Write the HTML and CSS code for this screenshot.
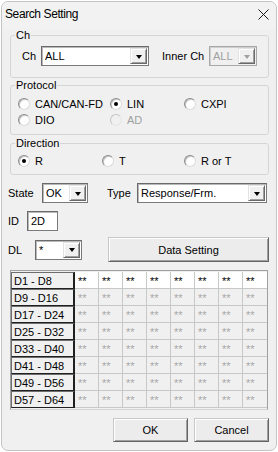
FILE: index.html
```html
<!DOCTYPE html>
<html>
<head>
  <meta charset="utf-8">
  <title>Search Setting</title>
  <link rel="stylesheet" href="styles.css">
</head>
<body>
  <div class="window">
    <div class="titlebar">
      <span class="title">Search Setting</span>
      <svg class="close" width="11" height="11" viewBox="0 0 11 11">
        <path d="M0.5 0.5 L10.5 10.5 M10.5 0.5 L0.5 10.5" stroke="#1a1a1a" stroke-width="1" fill="none"/>
      </svg>
    </div>

    <div class="content">
      <fieldset class="group group-ch">
        <legend>Ch</legend>
        <div class="ch-row">
          <span class="lbl-ch">Ch</span>
          <div class="combo combo-ch"><span class="val">ALL</span><span class="drop"><i class="tri"></i></span></div>
          <span class="lbl-inner">Inner Ch</span>
          <div class="combo combo-inner disabled"><span class="val">ALL</span><span class="drop"><i class="tri"></i></span></div>
        </div>
      </fieldset>

      <fieldset class="group group-proto">
        <legend>Protocol</legend>
        <div class="radios proto-radios">
          <label class="radio"><i class="dot"></i>CAN/CAN-FD</label>
          <label class="radio checked"><i class="dot"></i>LIN</label>
          <label class="radio"><i class="dot"></i>CXPI</label>
          <label class="radio"><i class="dot"></i>DIO</label>
          <label class="radio disabled"><i class="dot"></i>AD</label>
        </div>
      </fieldset>

      <fieldset class="group group-dir">
        <legend>Direction</legend>
        <div class="radios dir-radios">
          <label class="radio checked"><i class="dot"></i>R</label>
          <label class="radio"><i class="dot"></i>T</label>
          <label class="radio"><i class="dot"></i>R or T</label>
        </div>
      </fieldset>

      <div class="form-row row-state">
        <span class="lbl lbl-state">State</span>
        <div class="combo combo-state"><span class="val">OK</span><span class="drop"><i class="tri"></i></span></div>
        <span class="lbl lbl-type">Type</span>
        <div class="combo combo-type"><span class="val">Response/Frm.</span><span class="drop"><i class="tri"></i></span></div>
      </div>

      <div class="form-row row-id">
        <span class="lbl lbl-id">ID</span>
        <div class="edit edit-id">2D</div>
      </div>

      <div class="form-row row-dl">
        <span class="lbl lbl-dl">DL</span>
        <div class="combo combo-dl"><span class="val">*</span><span class="drop"><i class="tri"></i></span></div>
        <button class="btn btn-data">Data Setting</button>
      </div>

      <div class="grid">
        <div class="hd">D1 - D8</div><div class="cell on">**</div><div class="cell on">**</div><div class="cell on">**</div><div class="cell on">**</div><div class="cell on">**</div><div class="cell on">**</div><div class="cell on">**</div><div class="cell on last">**</div>
        <div class="hd">D9 - D16</div><div class="cell">**</div><div class="cell">**</div><div class="cell">**</div><div class="cell">**</div><div class="cell">**</div><div class="cell">**</div><div class="cell">**</div><div class="cell last">**</div>
        <div class="hd">D17 - D24</div><div class="cell">**</div><div class="cell">**</div><div class="cell">**</div><div class="cell">**</div><div class="cell">**</div><div class="cell">**</div><div class="cell">**</div><div class="cell last">**</div>
        <div class="hd">D25 - D32</div><div class="cell">**</div><div class="cell">**</div><div class="cell">**</div><div class="cell">**</div><div class="cell">**</div><div class="cell">**</div><div class="cell">**</div><div class="cell last">**</div>
        <div class="hd">D33 - D40</div><div class="cell">**</div><div class="cell">**</div><div class="cell">**</div><div class="cell">**</div><div class="cell">**</div><div class="cell">**</div><div class="cell">**</div><div class="cell last">**</div>
        <div class="hd">D41 - D48</div><div class="cell">**</div><div class="cell">**</div><div class="cell">**</div><div class="cell">**</div><div class="cell">**</div><div class="cell">**</div><div class="cell">**</div><div class="cell last">**</div>
        <div class="hd">D49 - D56</div><div class="cell">**</div><div class="cell">**</div><div class="cell">**</div><div class="cell">**</div><div class="cell">**</div><div class="cell">**</div><div class="cell">**</div><div class="cell last">**</div>
        <div class="hd">D57 - D64</div><div class="cell">**</div><div class="cell">**</div><div class="cell">**</div><div class="cell">**</div><div class="cell">**</div><div class="cell">**</div><div class="cell">**</div><div class="cell last">**</div>
      </div>

      <div class="actions">
        <button class="btn btn-ok">OK</button>
        <button class="btn btn-cancel">Cancel</button>
      </div>
    </div>
  </div>
</body>
</html>
```

FILE: styles.css
```css
* {
  box-sizing: border-box;
}

body {
  margin: 0;
  background: #ffffff;
  font-family: "Liberation Sans", Arial, sans-serif;
  font-size: 11px;
  color: #000;
}

.window {
  margin: 1px 0 0 1px;
  width: 276px;
  height: 450px;
  border: 1px solid #c4c4c4;
  border-radius: 7px;
  background: #f0f0f0;
  overflow: hidden;
}

.titlebar {
  height: 27px;
  display: flex;
  justify-content: space-between;
  align-items: flex-start;
  padding: 5px 7px 0 3px;
  background: #f2f2f2;
}

.title {
  font-size: 12px;
  line-height: 14px;
  letter-spacing: -0.4px;
  color: #000;
}

.close {
  margin-top: 2px;
}

.content {
  padding: 0 7px 0 8px;
}

/* group boxes */
.group {
  margin: 0;
  padding: 0 7px;
  border: 1px solid #d5d5d5;
  border-radius: 3px;
  min-width: 0;
}

.group legend {
  margin-left: -3px;
  padding: 0 1px;
  line-height: 13px;
}

.group-ch {
  padding-top: 4px;
  padding-bottom: 11px;
}

.group-proto {
  margin-top: 1px;
  padding-top: 4px;
  padding-bottom: 6px;
}

.group-dir {
  margin-top: 2px;
  padding-top: 3px;
  padding-bottom: 5px;
}

.ch-row {
  display: flex;
  align-items: center;
  height: 20px;
}

.lbl-ch {
  margin-left: 4px;
  width: 19px;
}

.combo-ch {
  width: 108px;
}

.lbl-inner {
  margin-left: 13px;
  width: 47px;
}

.combo-inner {
  width: 48px;
}

/* combo boxes */
.combo {
  height: 20px;
  display: flex;
  align-items: stretch;
  border: 1px solid #7a7a7a;
  border-top-color: #6a6a6a;
  border-left-color: #6a6a6a;
  box-shadow: inset 1px 1px 0 #b9b9b9;
  background: #fff;
  padding: 1px 1px 1px 2px;
}

.combo .val {
  flex: 1;
  line-height: 16px;
  padding-left: 1px;
  white-space: nowrap;
  overflow: hidden;
}

.combo .drop {
  width: 17px;
  background: #f0f0f0;
  border: 1px solid;
  border-color: #e3e3e3 #696969 #696969 #e3e3e3;
  box-shadow: inset 1px 1px 0 #fff, inset -1px -1px 0 #a0a0a0;
  display: flex;
  align-items: center;
  justify-content: center;
}

.combo .tri {
  width: 0;
  height: 0;
  border-left: 3.5px solid transparent;
  border-right: 3.5px solid transparent;
  border-top: 4px solid #000;
  margin-top: 1px;
}

.combo.disabled {
  background: #f0f0f0;
  border-color: #a8a8a8;
  box-shadow: inset 1px 1px 0 #cfcfcf;
}

.combo.disabled .val {
  color: #a0a0a0;
}

.combo.disabled .tri {
  border-top-color: #a0a0a0;
}

/* radio buttons */
.radios {
  display: grid;
  grid-auto-rows: 16px;
}

.proto-radios {
  grid-template-columns: 92px 74px auto;
}

.dir-radios {
  grid-template-columns: 84px 82px auto;
}

.radio {
  display: flex;
  align-items: center;
  white-space: nowrap;
}

.radio .dot {
  width: 12px;
  height: 12px;
  margin-right: 5px;
  border-radius: 50%;
  background: #fff;
  border: 1px solid;
  border-color: #8d8d8d #dadada #dadada #8d8d8d;
  box-shadow: inset 1px 1px 0 #c4c4c4;
  display: flex;
  align-items: center;
  justify-content: center;
}

.radio.checked .dot::after {
  content: "";
  width: 4px;
  height: 4px;
  border-radius: 50%;
  background: #000;
}

.radio.disabled {
  color: #a0a0a0;
}

.radio.disabled .dot {
  background: #f0f0f0;
  border-color: #c4c4c4 #e6e6e6 #e6e6e6 #c4c4c4;
  box-shadow: none;
}

/* form rows */
.form-row {
  display: flex;
  align-items: center;
  margin-left: -2px;
}

.row-state {
  margin-top: 8px;
  height: 20px;
}

.lbl-state {
  width: 34px;
}

.combo-state {
  width: 46px;
}

.lbl-type {
  margin-left: 19px;
  width: 30px;
}

.combo-type {
  width: 130px;
}

.row-id {
  margin-top: 8px;
  height: 20px;
}

.lbl-id {
  width: 19px;
}

.edit {
  height: 20px;
  border: 1px solid #7a7a7a;
  border-top-color: #6a6a6a;
  border-left-color: #6a6a6a;
  box-shadow: inset 1px 1px 0 #b9b9b9;
  background: #fff;
  line-height: 18px;
  padding-left: 3px;
}

.edit-id {
  width: 31px;
}

.row-dl {
  margin-top: 6px;
  height: 25px;
}

.lbl-dl {
  width: 27px;
}

.combo-dl {
  width: 47px;
}

/* buttons */
.btn {
  font-family: "Liberation Sans", Arial, sans-serif;
  font-size: 11px;
  color: #000;
  background: #ececec;
  border: 1px solid;
  border-color: #c8c8c8 #646464 #646464 #c8c8c8;
  box-shadow: inset 1px 1px 0 #fff, inset -1px -1px 0 #a0a0a0;
  padding: 0;
}

.btn-data {
  margin-left: auto;
  width: 161px;
  height: 25px;
}

/* data grid */
.grid {
  margin-top: 8px;
  width: 258px;
  display: grid;
  grid-template-columns: 64px repeat(8, 24px);
  grid-auto-rows: 17px;
  border: 1px solid;
  border-color: #a0a0a0 #a0a0a0 #d4d4d4 #a0a0a0;
  padding: 1px 0;
  background: #f0f0f0;
}

.hd {
  border: 1px solid;
  border-color: #6e6e6e #202020 #202020 #6e6e6e;
  border-right-width: 2px;
  padding: 2px 0 0 2px;
  line-height: 13px;
  white-space: nowrap;
}

.cell {
  border-right: 1px solid #c8c8c8;
  border-bottom: 1px solid #c8c8c8;
  padding: 3px 0 0 3px;
  line-height: 13px;
  color: #a8a8a8;
}

.cell.on {
  background: #fff;
  color: #000;
}

.cell.last {
  border-right: none;
}

.actions {
  margin-top: 8px;
  display: flex;
  justify-content: flex-end;
  gap: 6px;
}

.btn-ok,
.btn-cancel {
  width: 75px;
  height: 24px;
}
```
